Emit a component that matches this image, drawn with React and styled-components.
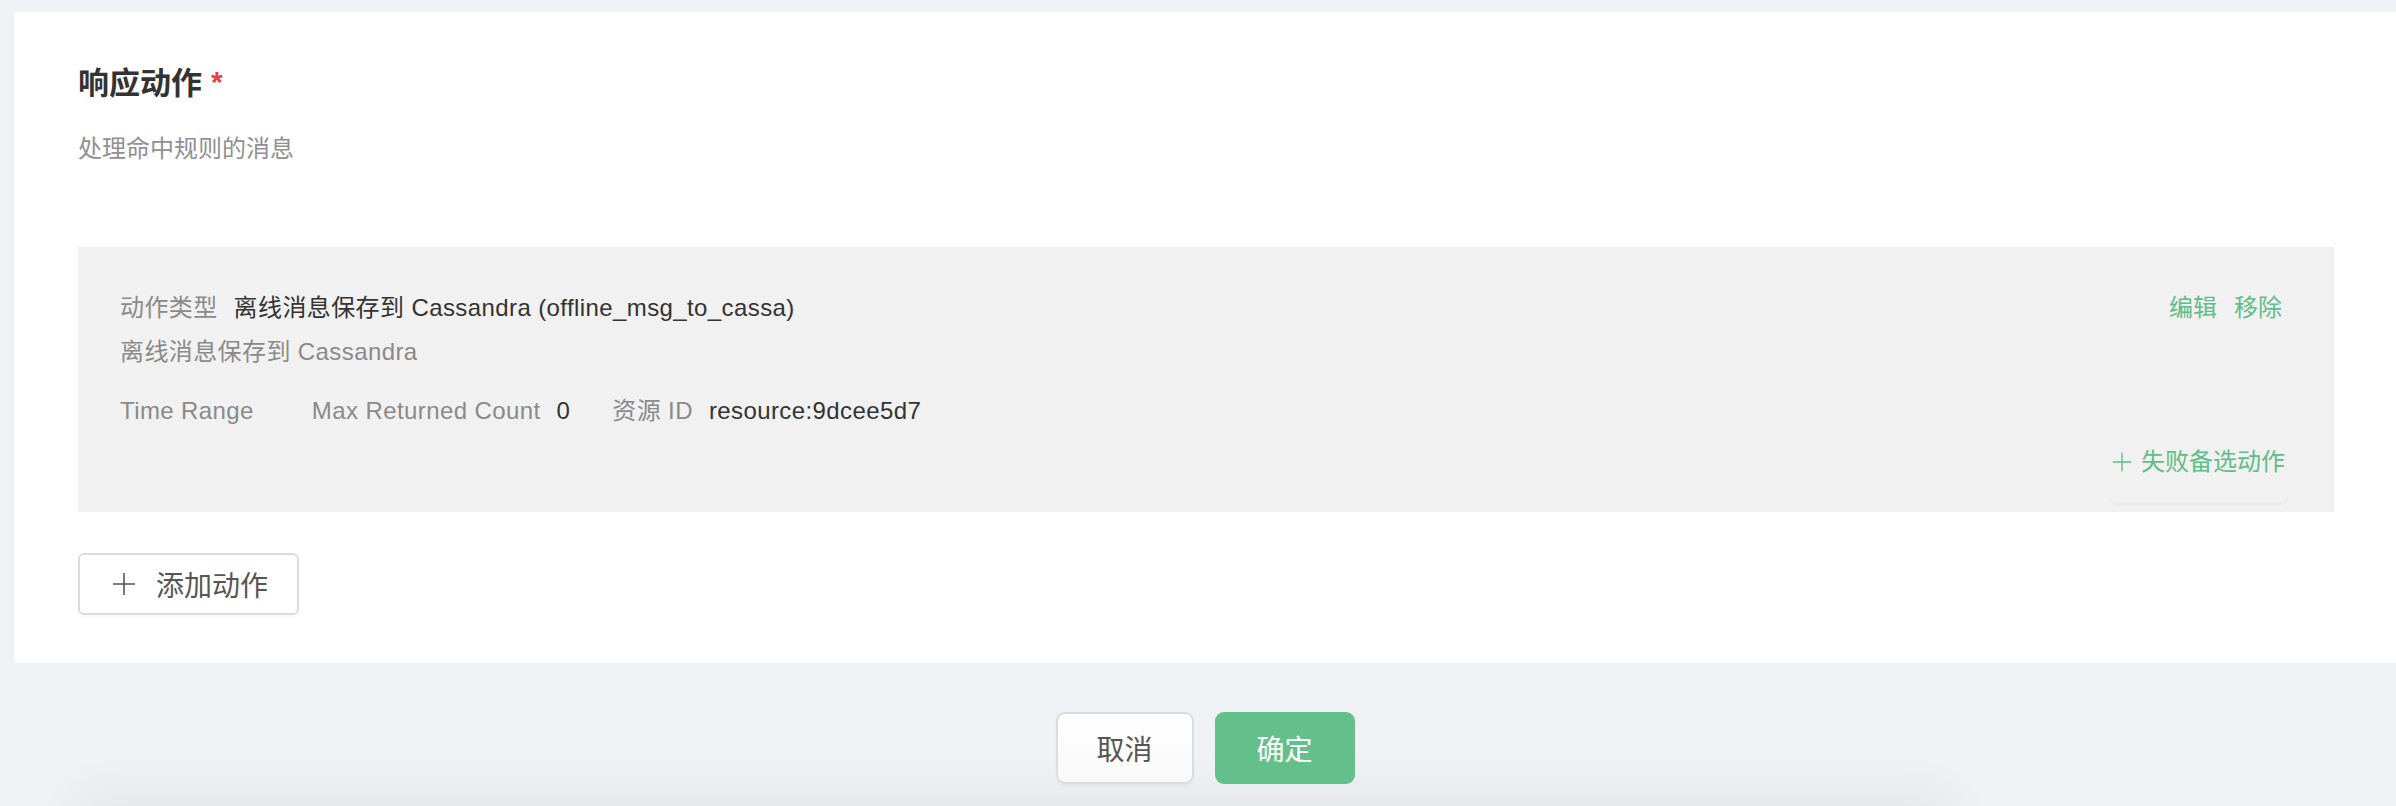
import React from "react";
import styled, { createGlobalStyle } from "styled-components";

const Global = createGlobalStyle`
  html, body { margin: 0; padding: 0; }
  body {
    background: #f0f1f5;
    font-family: "Liberation Sans", "Noto Sans CJK SC", sans-serif;
    overflow: hidden;
  }
`;

const Page = styled.div`
  padding: 12px 0 0 14px;
  width: 2382px;
  height: 806px;
  overflow: hidden;
`;

const Card = styled.section`
  background: #fff;
  border-radius: 4px 0 0 4px;
  padding: 50px 62px 48px 64px;
`;

const Title = styled.h2`
  margin: 0;
  font-size: 31px;
  line-height: 44px;
  font-weight: 700;
  color: #333;
  display: flex;
  align-items: flex-start;
`;

const Required = styled.span`
  color: #e84040;
  font-size: 30px;
  line-height: 40px;
  margin-left: 9px;
  font-weight: 700;
`;

const Subtitle = styled.p`
  margin: 23px 0 0;
  font-size: 24px;
  line-height: 40px;
  color: #8f8f94;
`;

const ActionBox = styled.div`
  margin-top: 78px;
  background: #f1f1f1;
  padding: 39px 46px 10px 42px;
  display: flex;
  flex-direction: column;
  font-size: 24px;
`;

const Row = styled.div`
  display: flex;
  align-items: center;
  line-height: 44px;
  letter-spacing: 0.4px;
  margin-top: ${(p) => p.$gap || 0}px;
`;

const Item = styled.div`
  display: flex;
  margin-right: 42px;
`;

const Label = styled.span`
  color: #8a8a8a;
  margin-right: 16px;
`;

const Value = styled.span`
  color: #333;
`;

const Desc = styled.span`
  color: #8a8a8a;
`;

const Links = styled.div`
  margin-left: auto;
  margin-right: 6px;
  display: flex;
  gap: 17px;
  letter-spacing: 0;
`;

const LinkText = styled.a`
  color: #5fbd88;
  cursor: pointer;
`;

const FallbackButton = styled.button`
  align-self: flex-end;
  margin-top: 7px;
  background: transparent;
  border: none;
  border-radius: 8px;
  box-shadow: 0 4px 0 rgba(0, 0, 0, 0.018);
  color: #5fbd88;
  font-family: inherit;
  font-size: 24px;
  line-height: 44px;
  padding: 0 3px 18px 3px;
  display: flex;
  align-items: center;
  gap: 9px;
  cursor: pointer;
`;

const AddButton = styled.button`
  margin-top: 41px;
  width: 221px;
  height: 62px;
  background: #fff;
  border: 2px solid #dcdcdc;
  border-radius: 6px;
  box-shadow: 0 3px 2px rgba(0, 0, 0, 0.02);
  color: #555;
  font-family: inherit;
  font-size: 28px;
  display: flex;
  align-items: center;
  padding: 0 0 0 32px;
  gap: 20px;
  cursor: pointer;
`;

const Footer = styled.div`
  display: flex;
  justify-content: center;
  gap: 21px;
  padding: 49px 0 22px;
`;

const FooterButton = styled.button`
  width: ${(p) => p.$w}px;
  height: 72px;
  border-radius: 9px;
  font-family: inherit;
  font-size: 28px;
  cursor: pointer;
  ${(p) =>
    p.$primary
      ? `
    background: #64c08b;
    border: none;
    color: #fff;
  `
      : `
    background: linear-gradient(#ffffff, #f9f9f9);
    border: 2px solid #dcdcdc;
    color: #555;
    box-shadow: 0 3px 2px rgba(0,0,0,0.03);
  `}
`;

const Dock = styled.div`
  margin-left: 60px;
  width: 1880px;
  height: 60px;
  border-radius: 20px;
  background: #f0f1f5;
  box-shadow: 0 -12px 50px rgba(0, 0, 0, 0.05);
`;

const Plus = ({ size = 24, color = "currentColor", stroke = 2 }) => (
  <svg width={size} height={size} viewBox="0 0 24 24" fill="none">
    <path d="M12 1v22M1 12h22" stroke={color} strokeWidth={stroke} />
  </svg>
);

export default function App() {
  return (
    <>
      <Global />
      <Page>
        <Card>
          <Title>
            响应动作<Required>*</Required>
          </Title>
          <Subtitle>处理命中规则的消息</Subtitle>
          <ActionBox>
            <Row>
              <Label>动作类型</Label>
              <Value>离线消息保存到 Cassandra (offline_msg_to_cassa)</Value>
              <Links>
                <LinkText>编辑</LinkText>
                <LinkText>移除</LinkText>
              </Links>
            </Row>
            <Row>
              <Desc>离线消息保存到 Cassandra</Desc>
            </Row>
            <Row $gap={15}>
              <Item>
                <Label>Time Range</Label>
                <Value></Value>
              </Item>
              <Item>
                <Label>Max Returned Count</Label>
                <Value>0</Value>
              </Item>
              <Item>
                <Label>资源 ID</Label>
                <Value>resource:9dcee5d7</Value>
              </Item>
            </Row>
            <FallbackButton>
              <Plus size={20} stroke={1.6} />
              失败备选动作
            </FallbackButton>
          </ActionBox>
          <AddButton>
            <Plus size={24} stroke={1.6} />
            添加动作
          </AddButton>
        </Card>
        <Footer>
          <FooterButton $w={138}>取消</FooterButton>
          <FooterButton $w={140} $primary>
            确定
          </FooterButton>
        </Footer>
        <Dock />
      </Page>
    </>
  );
}
